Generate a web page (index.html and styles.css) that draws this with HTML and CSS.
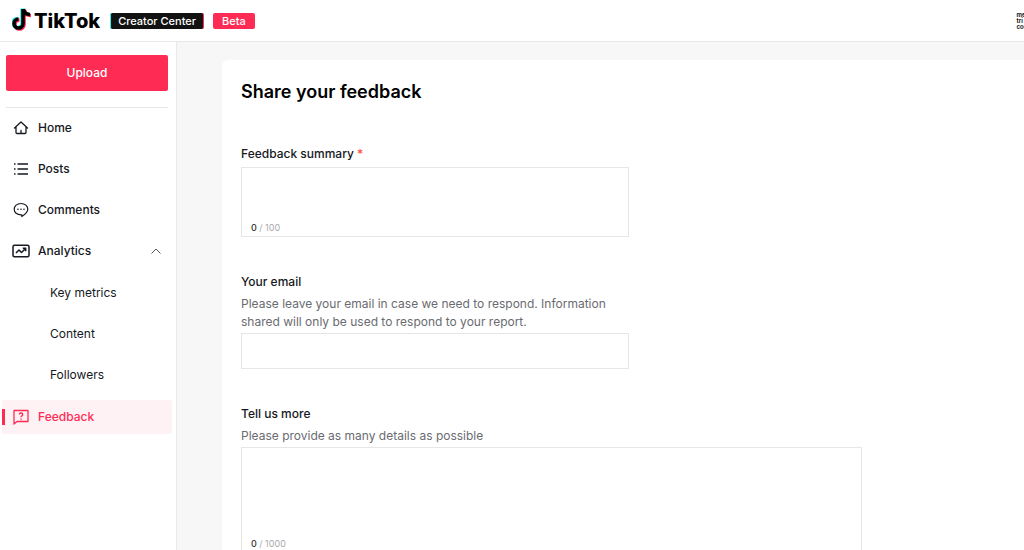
FILE: index.html
```
<!DOCTYPE html>
<html lang="en">
<head>
  <meta charset="UTF-8">
  <meta name="viewport" content="width=device-width, initial-scale=1.0">
  <title>Feedback - TikTok Creator Center</title>
  <link rel="stylesheet" href="styles.css">
</head>
<body>
  <header class="header">
    <a class="logo" href="#">
      <svg class="logo-note" width="20" height="23" viewBox="0 0 20 23" fill="none" stroke-width="3.600">
        <path stroke="#25f4ee" d="M10 .5v14.500a4.500 4.500 0 1 1-4.500-4.500M10.500.5c.5 3.500 3 5.500 6.500 5.500"/>
        <path stroke="#fe2c55" d="M12 2v14.500a4.500 4.500 0 1 1-4.500-4.500M12.500 2c.5 3.500 3 5.500 6.500 5.500"/>
        <path stroke="#000" d="M11 1v14.500a4.500 4.500 0 1 1-4.500-4.500M11.500 1c.5 3.500 3 5.500 6.500 5.500"/>
      </svg>
      <span class="logo-name">TikTok</span>
    </a>
    <span class="tag tag-center">Creator Center</span>
    <span class="tag tag-beta">Beta</span>
    <a class="avatar" href="#">me<br>tri<br>cool</a>
  </header>

  <div class="page">
    <aside class="sidebar">
      <button class="upload" type="button">Upload</button>
      <nav class="menu">
        <a class="item" href="#">
          <svg width="16" height="16" viewBox="0 0 16 16" fill="none" stroke="currentColor" stroke-width="1.300" stroke-linejoin="round" stroke-linecap="round">
            <path d="M1.500 8 8 2l6.500 6M3 7v5.500q0 1 1 1h8q1 0 1-1V7M8 10.500v3"/>
          </svg>
          Home
        </a>
        <a class="item" href="#">
          <svg width="16" height="16" viewBox="0 0 16 16" stroke="currentColor" stroke-width="1.500">
            <path d="M1 3h1.500M1 8h1.500M1 13h1.500M4.500 3H15M4.500 8H15M4.500 13H15"/>
          </svg>
          Posts
        </a>
        <a class="item" href="#">
          <svg width="16" height="16" viewBox="0 0 16 16" fill="none" stroke="currentColor" stroke-width="1.200" stroke-linejoin="round">
            <path d="M8 1.500c4 0 6.800 2.500 6.800 5.800 0 3-2.300 4.800-6 7.200v-1.700H8c-4 0-6.800-2.200-6.800-5.500S4 1.500 8 1.500Z"/>
            <path stroke-width="1.600" stroke-linecap="round" d="M5 7.300h0M8 7.300h0M11 7.300h0"/>
          </svg>
          Comments
        </a>
        <a class="item" href="#">
          <svg width="16" height="16" viewBox="0 0 16 16" fill="none" stroke="currentColor" stroke-width="1.500" stroke-linejoin="round" overflow="visible">
            <rect x="0" y="2.200" width="16" height="11.600" rx="1.500"/>
            <path d="M3 10 6 7l2.500 2.500L12 6M9.800 5.300h2.900v2.900"/>
          </svg>
          Analytics
          <svg class="arrow" width="10" height="10" viewBox="0 0 10 10" fill="none" stroke="#555">
            <path d="M.5 7.500 5 3l4.500 4.500"/>
          </svg>
        </a>
        <div class="submenu">
          <a class="item sub" href="#">Key metrics</a>
          <a class="item sub" href="#">Content</a>
          <a class="item sub" href="#">Followers</a>
        </div>
        <a class="item active" href="#">
          <svg width="16" height="16" viewBox="0 0 16 16" fill="none" stroke="currentColor" stroke-width="1.300" stroke-linejoin="round">
            <path d="M1 15V1.500h14v11H4Z"/>
            <path stroke-width="1.400" d="M6.300 5.600C6.300 3.400 9.700 3.500 9.700 5.500 9.700 6.700 8 6.800 8 8.300M8 9.400v1.300"/>
          </svg>
          Feedback
        </a>
      </nav>
    </aside>

    <main class="content">
      <form class="card">
        <h1>Share your feedback</h1>

        <div class="field">
          <label for="summary">Feedback summary <span class="required">*</span></label>
          <div class="box">
            <textarea id="summary" rows="2" maxlength="100" required></textarea>
            <div class="count"><b>0</b> / 100</div>
          </div>
        </div>

        <div class="field">
          <label for="email">Your email</label>
          <p class="hint">Please leave your email in case we need to respond. Information shared will only be used to respond to your report.</p>
          <input class="box" id="email" type="email">
        </div>

        <div class="field wide">
          <label for="details">Tell us more</label>
          <p class="hint">Please provide as many details as possible</p>
          <div class="box">
            <textarea id="details" rows="4" maxlength="1000"></textarea>
            <div class="count"><b>0</b> / 1000</div>
          </div>
        </div>
      </form>
    </main>
  </div>
</body>
</html>
```
FILE: styles.css
```
* {
  box-sizing: border-box;
}

body {
  margin: 0;
  height: 100vh;
  display: flex;
  flex-direction: column;
  overflow: hidden;
  font-family: Inter, "Liberation Sans", sans-serif;
  font-size: 12px;
  line-height: 18px;
  color: #161823;
  background: #fff;
}

a {
  color: inherit;
  text-decoration: none;
}

.header {
  display: flex;
  align-items: center;
  flex-shrink: 0;
  height: 42px;
  padding-left: 12px;
  border-bottom: 1px solid #e8e8e8;
}

.logo {
  display: flex;
  align-items: center;
  gap: 2px;
  margin-right: 10px;
  color: #000;
}

.logo-note {
  margin-bottom: 2px;
}

.logo-name {
  font-size: 20px;
  font-weight: 800;
}

.tag {
  padding: 0 9px;
  margin-right: 9px;
  border-radius: 2px;
  font-size: 11px;
  font-weight: 500;
  line-height: 16px;
  color: #fff;
}

.tag-center {
  padding: 0 7px;
  background: #121212;
  border-left: 1px solid #25f4ee;
  border-right: 1px solid #fe2c55;
}

.tag-beta {
  background: #fe2c55;
}

/* the account picture runs off the edge of the bar */
.avatar {
  margin-left: auto;
  margin-right: -5px;
  font-size: 6px;
  font-weight: 700;
  line-height: 6px;
}

.page {
  display: flex;
  flex: 1;
  min-height: 0;
}

.sidebar {
  flex: 0 0 177px;
  padding: 13px 4px 0 2px;
  border-right: 1px solid #e9e9e9;
}

.upload {
  display: block;
  width: 162px;
  height: 36px;
  margin: 0 4px;
  border: 0;
  border-radius: 2px;
  background: #fe2c55;
  color: #fff;
  font: inherit;
  font-weight: 500;
}

.menu {
  display: flex;
  flex-direction: column;
  gap: 7px;
  margin-top: 16px;
  padding-top: 4px;
}

.menu::before {
  content: "";
  height: 1px;
  margin: -4px 4px -4px;
  background: #e6e6e6;
}

.item {
  position: relative;
  display: flex;
  align-items: center;
  gap: 9px;
  height: 34px;
  padding: 0 11px;
  border-radius: 2px;
  font-weight: 500;
}

.arrow {
  margin-left: auto;
}

.submenu {
  display: flex;
  flex-direction: column;
  gap: 7px;
  padding: 1px 0;
}

.sub {
  padding-left: 48px;
  font-weight: 400;
}

.active {
  background: #fff2f5;
  color: #fe2c55;
}

.active::before {
  content: "";
  position: absolute;
  left: 0;
  top: 9px;
  width: 3px;
  height: 16px;
  background: #fe2c55;
}

.content {
  flex: 1;
  padding: 18px 0 0 45px;
  background: #f7f7f7;
}

.card {
  min-height: 100%;
  padding: 18px 0 0 19px;
  border-radius: 6px 0 0 0;
  background: #fff;
}

h1 {
  margin: 0 0 39px;
  font-size: 18px;
  font-weight: 600;
  line-height: 28px;
  color: #000;
}

.field {
  display: flex;
  flex-direction: column;
  max-width: 388px;
  margin-bottom: 36px;
}

.wide {
  max-width: 621px;
  margin-bottom: 0;
}

label {
  margin-bottom: 4px;
  font-weight: 500;
}

.required {
  color: #ff4c3a;
}

.hint {
  margin: 0 0 2px;
  color: #6a6b70;
}

.box {
  border: 1px solid #e6e6e8;
  background: #fff;
}

input.box {
  height: 36px;
  padding: 0 9px;
  font: inherit;
}

textarea {
  display: block;
  width: 100%;
  padding: 8px 9px;
  border: 0;
  resize: none;
  font: inherit;
}

.count {
  padding: 0 9px;
  font-size: 9px;
  line-height: 16px;
  color: #a9a9ad;
}

.count b {
  font-weight: 500;
  color: #333;
}
```
